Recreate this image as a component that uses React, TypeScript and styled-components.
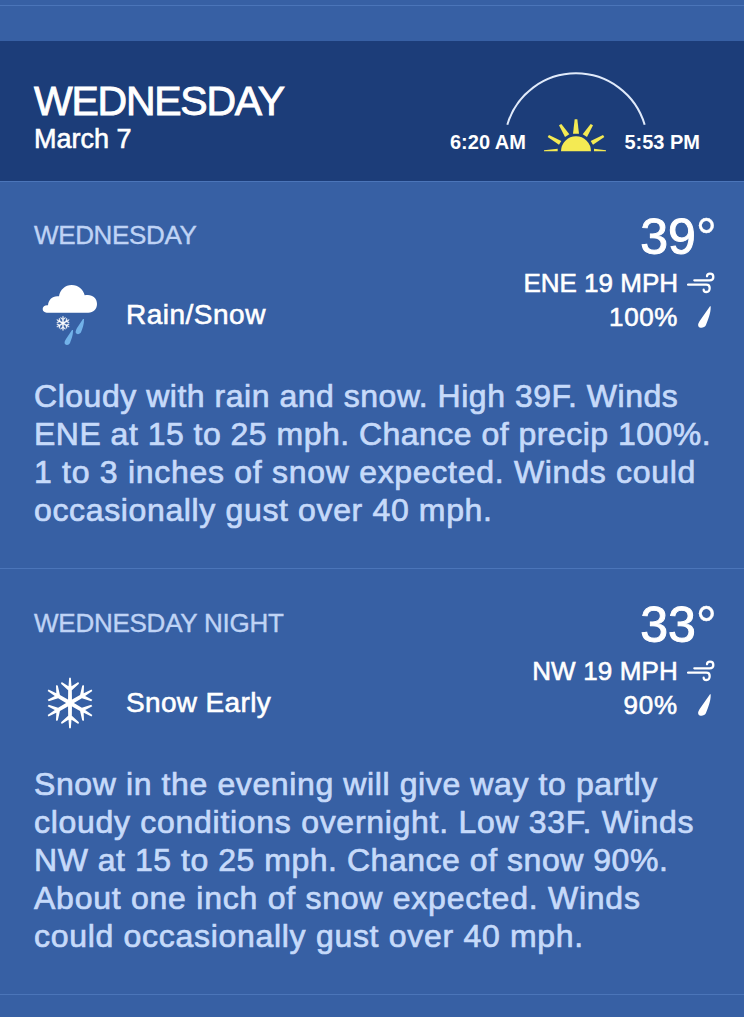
import React from "react";
import styled, { createGlobalStyle } from "styled-components";

const GlobalStyle = createGlobalStyle`
  *, *::before, *::after { box-sizing: border-box; }
  body {
    margin: 0;
    background: #3760a4;
    color: #fff;
    font-family: "Liberation Sans", Helvetica, Arial, sans-serif;
  }
`;

const Screen = styled.main`
  display: flex;
  flex-direction: column;
  height: 1017px;
  overflow: hidden;
  background: #3760a4;
`;

const PreviousDay = styled.div`
  height: 6px;
  border-bottom: 1px solid #4b75b9;
`;

const DayHeader = styled.header`
  display: flex;
  justify-content: space-between;
  height: 141px;
  margin-top: 35px;
  padding: 30px 44px 0 34px;
  background: #1c3d79;
  border-bottom: 1px solid #4b75b9;
`;

const Text = styled.span<{ $size: number; $line: number; $track?: number; $weight?: number; $tone?: string }>`
  display: block;
  white-space: nowrap;
  font-size: ${(p) => p.$size}px;
  line-height: ${(p) => p.$line}px;
  letter-spacing: ${(p) => p.$track ?? 0}px;
  color: ${(p) => p.$tone ?? "#fff"};
  -webkit-text-stroke: ${(p) => p.$weight ?? 0.6}px currentColor;
`;

const DayName = styled.div`
  display: flex;
  flex-direction: column;
`;

const SunTimes = styled.div`
  display: flex;
  flex-direction: column;
  align-items: center;
  width: 250px;
`;

const SunRow = styled.div`
  display: flex;
  justify-content: space-between;
  align-items: flex-start;
  width: 250px;
  margin-top: -6px;
`;

const SunTime = styled.span`
  margin-top: 11px;
  font-size: 20px;
  font-weight: 700;
  line-height: 24px;
  white-space: nowrap;
`;

const Period = styled.section`
  padding: 30px 29px 39px 34px;
  border-bottom: 1px solid #4b75b9;

  & + & {
    padding-top: 31px;
  }
`;

const Summary = styled.div`
  display: flex;
  justify-content: space-between;
  height: 165px;
`;

const Overview = styled.div`
  padding-top: 8px;
`;

const Condition = styled.div`
  display: flex;
  align-items: center;
  height: 60px;
  margin-top: 35px;
  gap: 20px;
`;

const IconSlot = styled.div`
  width: 72px;
  height: 60px;
`;

const Readings = styled.div`
  display: flex;
  flex-direction: column;
  align-items: flex-end;
`;

const Temperature = styled.div`
  display: flex;
  height: 54px;
  margin-right: -2px;
`;

const Reading = styled.div`
  display: flex;
  align-items: center;
  height: 34px;
  gap: 9px;
`;

const Description = styled.p`
  margin: 0;
`;

const Icon = styled.svg`
  display: block;
  flex: none;
`;

const SunArc = () => (
  <Icon width="144" height="54" viewBox="219 64 432 162" fill="none">
    <path d="M232 225A214.8 214.8 0 0 1 644 225" stroke="#e0eafa" strokeWidth="6" />
  </Icon>
);

const SunIcon = () => (
  <Icon width="64" height="34" viewBox="339 206 192 102" fill="#f4ea53">
    <path d="M393 303a45 45 0 0 1 90 0z" />
    <path d="M434 207h8l5 43h-18z" />
    <path d="M387 225l7-4 24 31-13 8z" />
    <path d="M489 225l-7-4-24 31 13 8z" />
    <path d="M353 260l4-6 37 18-7 11z" />
    <path d="M523 260l-4-6-37 18 7 11z" />
    <path d="M342 303v-3l41-5v8z" />
    <path d="M528 303v-3l-36-5v8z" />
  </Icon>
);

const WindIcon = () => (
  <Icon width="28" height="22" viewBox="530 216 84 66" fill="none" stroke="#fff" strokeWidth="6.8" strokeLinecap="round">
    <path d="M552 241H598C606 241 609 236 609 231C609 225 605 221 599 221C594 221 590 224 590 229" />
    <path d="M533 254H588C595 254 598 259 598 264C598 271 594 276 588 276C583 276 580 273 580 269" />
  </Icon>
);

const DropIcon = () => (
  <Icon width="28" height="22" viewBox="530 317 84 66" fill="#fff">
    <path d="M599 318H601C602 338 593 358 587 374C583 383 569 384 565 379C561 374 565 368 568 362Z" />
  </Icon>
);

const arms = [0, 60, 120, 180, 240, 300];

const Flake = () => (
  <>
    {arms.map((angle) => (
      <path
        key={angle}
        transform={`rotate(${angle})`}
        d="M-6 0L-5.500-38L-27-58L-25-63L-4.500-50L-2.500-76H2.500L4.500-50L25-63L27-58L5.500-38L6 0Z"
      />
    ))}
  </>
);

const SnowIcon = () => (
  <Icon width="72" height="60" viewBox="42 38 216 180" fill="#fff">
    <g transform="translate(150 128)">
      <Flake />
    </g>
  </Icon>
);

const RainSnowIcon = () => (
  <Icon width="72" height="60" viewBox="42 45 216 180" fill="#fff">
    <path d="M80 128C73 128 68 123 68 117C68 110 75 105 84 106C85 88 99 76 117 79C120 59 136 45 155 45C175 45 190 59 194 76C215 71 231 83 231 102C231 117 220 128 205 128Z" />
    <g transform="translate(129 160) scale(.28)" stroke="#fff" strokeWidth="4">
      <Flake />
    </g>
    <g fill="#72b2e9">
      <path d="M189 147H192C193 162 187 176 183 187C180 193 171 194 168 190C165 186 168 180 171 174Z" />
      <path d="M156 180H159C160 195 154 209 150 219C147 226 138 226 135 222C132 218 135 212 138 207Z" />
    </g>
  </Icon>
);

type Line = [text: string, track: number];

interface Forecast {
  label: Line;
  icon: React.ReactNode;
  condition: Line;
  degrees: number;
  wind: Line;
  precip: Line;
  lines: Line[];
}

const forecasts: Forecast[] = [
  {
    label: ["WEDNESDAY", -0.35],
    icon: <RainSnowIcon />,
    condition: ["Rain/Snow", 0.5],
    degrees: 39,
    wind: ["ENE 19 MPH", 0],
    precip: ["100%", 0.6],
    lines: [
      ["Cloudy with rain and snow. High 39F. Winds", 0.52],
      ["ENE at 15 to 25 mph. Chance of precip 100%.", 0.48],
      ["1 to 3 inches of snow expected. Winds could", 0.71],
      ["occasionally gust over 40 mph.", 0.64],
    ],
  },
  {
    label: ["WEDNESDAY NIGHT", -0.25],
    icon: <SnowIcon />,
    condition: ["Snow Early", 0.35],
    degrees: 33,
    wind: ["NW 19 MPH", 0.15],
    precip: ["90%", 0.8],
    lines: [
      ["Snow in the evening will give way to partly", 0.61],
      ["cloudy conditions overnight. Low 33F. Winds", 0.71],
      ["NW at 15 to 25 mph. Chance of snow 90%.", 0.53],
      ["About one inch of snow expected. Winds", 0.75],
      ["could occasionally gust over 40 mph.", 0.7],
    ],
  },
];

const ForecastPeriod = ({ label, icon, condition, degrees, wind, precip, lines }: Forecast) => (
  <Period>
    <Summary>
      <Overview>
        <Text $size={26} $line={30} $track={label[1]} $weight={0.4} $tone="#bfd3f5">{label[0]}</Text>
        <Condition>
          <IconSlot>{icon}</IconSlot>
          <Text $size={28} $line={30} $track={condition[1]} $weight={0.6}>{condition[0]}</Text>
        </Condition>
      </Overview>
      <Readings>
        <Temperature>
          <Text $size={50} $line={51} $weight={1}>{degrees}</Text>
          <Text $size={53} $line={51} $weight={0.3}>°</Text>
        </Temperature>
        <Reading>
          <Text $size={26} $line={34} $track={wind[1]}>{wind[0]}</Text>
          <WindIcon />
        </Reading>
        <Reading>
          <Text $size={26} $line={34} $track={precip[1]}>{precip[0]}</Text>
          <DropIcon />
        </Reading>
      </Readings>
    </Summary>
    <Description>
      {lines.map(([text, track]) => (
        <Text key={text} $size={32} $line={38} $track={track} $weight={0.7} $tone="#c6dafa">{text}</Text>
      ))}
    </Description>
  </Period>
);

export default function App() {
  return (
    <>
      <GlobalStyle />
      <Screen>
        <PreviousDay />
        <DayHeader>
          <DayName>
            <Text $size={41} $line={60} $track={-1.25} $weight={0.9}>WEDNESDAY</Text>
            <Text $size={27} $line={17}>March 7</Text>
          </DayName>
          <SunTimes>
            <SunArc />
            <SunRow>
              <SunTime>6:20 AM</SunTime>
              <SunIcon />
              <SunTime>5:53 PM</SunTime>
            </SunRow>
          </SunTimes>
        </DayHeader>
        {forecasts.map((forecast) => (
          <ForecastPeriod key={forecast.degrees} {...forecast} />
        ))}
      </Screen>
    </>
  );
}
